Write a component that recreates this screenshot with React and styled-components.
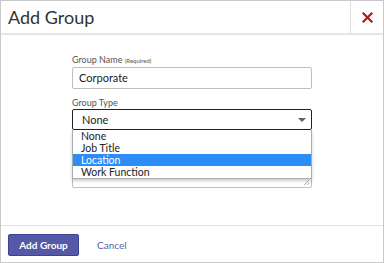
import React from 'react';
import styled, { createGlobalStyle } from 'styled-components';

const GlobalStyle = createGlobalStyle`
  html, body {
    margin: 0;
    padding: 0;
    background: #fff;
  }
  body {
    font-family: Lato, "Open Sans", sans-serif;
  }
`;

const Dialog = styled.div`
  box-sizing: border-box;
  width: 384px;
  height: 263px;
  border: 1px solid #c9c9cc;
  display: flex;
  flex-direction: column;
  background: #fff;
`;

const Header = styled.div`
  display: flex;
  height: 32px;
  border-bottom: 2px solid #e4e4ec;
`;

const Title = styled.h2`
  flex: 1;
  margin: 0;
  padding-left: 7px;
  font-size: 18px;
  font-weight: 400;
  line-height: 32px;
  color: #333;
`;

const CloseButton = styled.button`
  width: 33px;
  border: none;
  border-left: 1px solid #dcdce2;
  background: none;
  padding: 0;
  display: flex;
  align-items: center;
  justify-content: center;
  cursor: pointer;
`;

const Body = styled.div`
  flex: 1;
  padding: 19px 0 0 71px;
`;

const Field = styled.div`
  width: 240px;
  margin-bottom: ${p => p.$gap || 8}px;
  position: relative;
`;

const Label = styled.label`
  display: block;
  font-size: 9px;
  line-height: 12px;
  color: #555;
  small {
    font-size: 6px;
  }
`;

const TextInput = styled.div`
  box-sizing: border-box;
  height: 22px;
  border: 1px solid #bdbdc2;
  border-radius: 2px;
  padding: 0 6px;
  font-size: 11px;
  line-height: 20px;
  color: #222;
`;

const Select = styled.div`
  box-sizing: border-box;
  height: 21px;
  border: 1px solid #222;
  border-radius: 2px;
  padding: 0 8px 0 9px;
  display: flex;
  align-items: center;
  justify-content: space-between;
  font-size: 11px;
  color: #222;
`;

const Arrow = styled.span`
  width: 0;
  height: 0;
  border-left: 4px solid transparent;
  border-right: 4px solid transparent;
  border-top: 4px solid #5c6170;
  margin-right: -3px;
`;

const Options = styled.ul`
  position: absolute;
  left: 0;
  top: 33px;
  width: 240px;
  box-sizing: border-box;
  margin: 0;
  padding: 0;
  list-style: none;
  background: #fff;
  border: 1px solid #a9a9ae;
  border-top: none;
  box-shadow: 0 2px 3px rgba(0, 0, 0, 0.2);
  z-index: 2;
`;

const Option = styled.li`
  height: 12px;
  line-height: 12px;
  padding-left: 8px;
  font-size: 10.5px;
  color: ${p => (p.$active ? '#fff' : '#222')};
  background: ${p => (p.$active ? '#2e8cf7' : 'transparent')};
`;

const TextArea = styled.div`
  box-sizing: border-box;
  height: 46px;
  margin-top: 12px;
  border: 1px solid #c2c2c6;
  border-radius: 2px;
  position: relative;
`;

const Grip = styled.svg`
  position: absolute;
  right: 1px;
  bottom: 1px;
`;

const Footer = styled.div`
  border-top: 1px solid #e0e0ea;
  padding: 8px 7px 6px;
  display: flex;
  align-items: center;
  gap: 18px;
`;

const PrimaryButton = styled.button`
  box-sizing: border-box;
  width: 71px;
  height: 22px;
  background: #5458a7;
  border: 1px solid #3e4194;
  border-radius: 2px;
  color: #fff;
  font-family: inherit;
  font-weight: 700;
  font-size: 10px;
  padding: 0;
`;

const LinkButton = styled.button`
  background: none;
  border: none;
  padding: 0;
  color: #5a5fa9;
  font-family: inherit;
  font-size: 10px;
`;

const options = ['None', 'Job Title', 'Location', 'Work Function'];

export default function App() {
  return (
    <>
      <GlobalStyle />
      <Dialog>
        <Header>
          <Title>Add Group</Title>
          <CloseButton aria-label="Close">
            <svg width="11" height="11" viewBox="0 0 11 11">
              <path d="M1.5 1.5L9.5 9.5M9.5 1.5L1.5 9.5" stroke="#b3181d" strokeWidth="2.2" strokeLinecap="square" />
            </svg>
          </CloseButton>
        </Header>
        <Body>
          <Field>
            <Label>Group Name <small>(Required)</small></Label>
            <TextInput>Corporate</TextInput>
          </Field>
          <Field $gap={4}>
            <Label>Group Type</Label>
            <Select>
              None
              <Arrow />
            </Select>
            <Options>
              {options.map(o => (
                <Option key={o} $active={o === 'Location'}>{o}</Option>
              ))}
            </Options>
          </Field>
          <Field>
            <TextArea aria-label="Description">
              <Grip width="7" height="7" viewBox="0 0 7 7">
                <path d="M6 1L1 6M6 4L4 6" stroke="#aaa" strokeWidth="1" />
              </Grip>
            </TextArea>
          </Field>
        </Body>
        <Footer>
          <PrimaryButton>Add Group</PrimaryButton>
          <LinkButton>Cancel</LinkButton>
        </Footer>
      </Dialog>
    </>
  );
}
